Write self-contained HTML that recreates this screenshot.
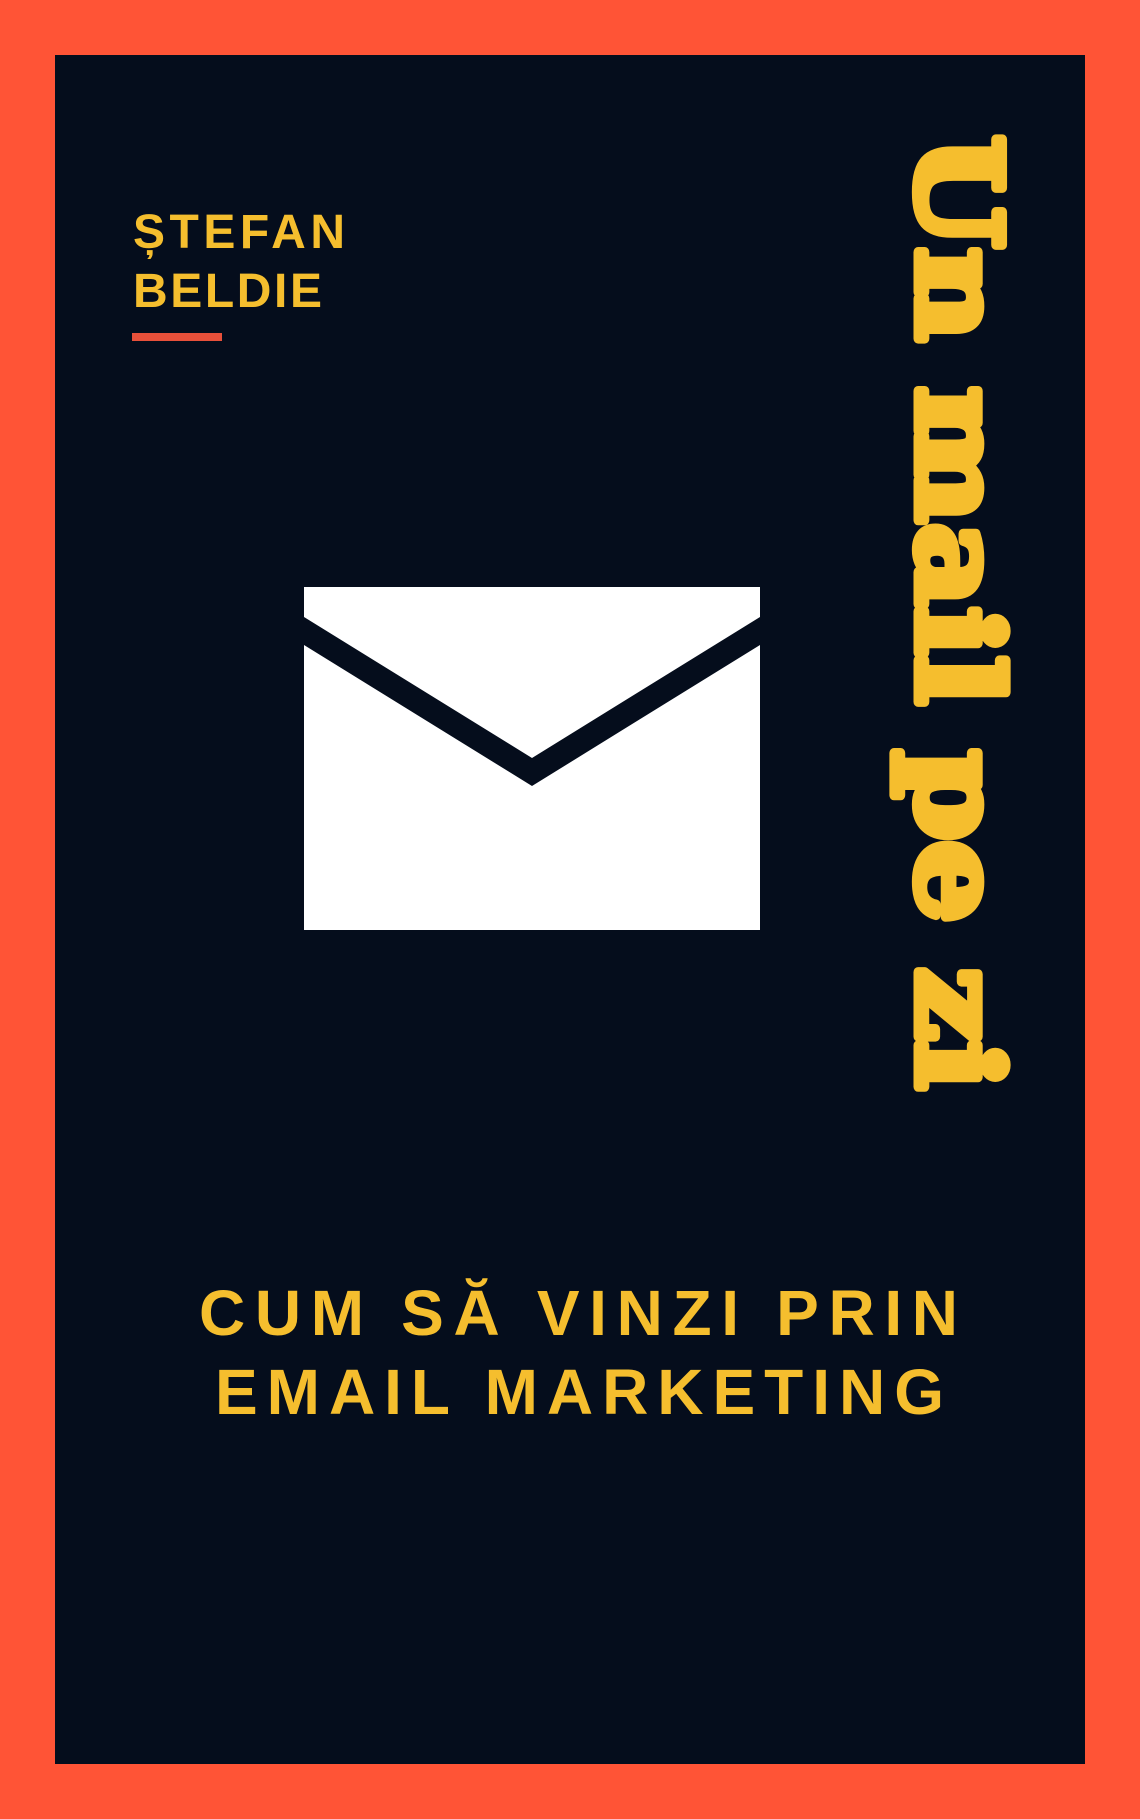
<!DOCTYPE html>
<html><head><meta charset="utf-8"><style>
html,body{margin:0;padding:0;background:#FF5436;}
svg{display:block;}
</style></head><body>
<svg width="1140" height="1819" viewBox="0 0 1140 1819" xmlns="http://www.w3.org/2000/svg">
<rect x="0" y="0" width="1140" height="1819" fill="#FF5436"/>
<rect x="55" y="55" width="1030" height="1709" fill="#050D1C"/>
<g font-family="Liberation Sans, DejaVu Sans, sans-serif" font-weight="bold" fill="#F5BE2E">
<text x="133" y="248" font-size="48" textLength="212" lengthAdjust="spacing">ȘTEFAN</text>
<text x="133" y="307" font-size="48" textLength="189" lengthAdjust="spacing">BELDIE</text>
<text x="199" y="1335" font-size="64" textLength="759" lengthAdjust="spacing">CUM SĂ VINZI PRIN</text>
<text x="215" y="1414" font-size="64" textLength="729" lengthAdjust="spacing">EMAIL MARKETING</text>
</g>
<rect x="132" y="333" width="90" height="8" fill="#E8503A"/>
<text transform="translate(918,135) rotate(90)" font-family="DejaVu Serif, Liberation Serif, serif" font-weight="bold" font-size="116" fill="#F5BE2E" stroke="#F5BE2E" stroke-width="9" stroke-linejoin="round" textLength="955" lengthAdjust="spacingAndGlyphs">Un mail pe zi</text>
<rect x="304" y="587" width="456" height="343" fill="#FFFFFF"/>
<polygon points="304,617 532,758 760,617 760,645 532,786 304,645" fill="#050D1C"/>
</svg>
</body></html>
